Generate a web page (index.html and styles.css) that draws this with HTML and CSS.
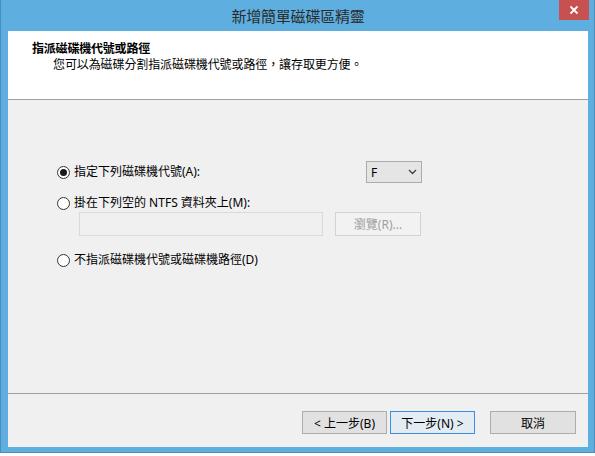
FILE: index.html
```html
<!DOCTYPE html>
<html lang="zh-Hant">
<head>
<meta charset="utf-8">
<title>新增簡單磁碟區精靈</title>
<link rel="stylesheet" href="styles.css">
</head>
<body>
<div class="window">
  <div class="titlebar">
    <span></span>
    <span class="title">新增簡單磁碟區精靈</span>
    <button class="close" aria-label="關閉">
      <svg width="10" height="10" viewBox="0 0 10 10"><path d="M1.5 1.5 L8.5 8.5 M8.5 1.5 L1.5 8.5" stroke="#fff" stroke-width="1.8" fill="none"/></svg>
    </button>
  </div>
  <div class="client">
    <div class="header">
      <div class="h-title">指派磁碟機代號或路徑</div>
      <div class="h-sub">您可以為磁碟分割指派磁碟機代號或路徑，讓存取更方便。</div>
    </div>
    <div class="body">
      <div class="options">
        <div class="row row-first">
          <label class="radio-label"><span class="radio checked"></span>指定下列磁碟機代號(A):</label>
          <div class="combo"><span>F</span>
            <svg width="9" height="6" viewBox="0 0 9 6"><path d="M1 1 L4.5 4.5 L8 1" stroke="#444" stroke-width="1.4" fill="none"/></svg>
          </div>
        </div>
        <div class="row row-second">
          <label class="radio-label"><span class="radio"></span>掛在下列空的 NTFS 資料夾上(M):</label>
        </div>
        <div class="row row-path">
          <div class="textbox"></div>
          <button class="btn disabled">瀏覽(R)...</button>
        </div>
        <div class="row row-third">
          <label class="radio-label"><span class="radio"></span>不指派磁碟機代號或磁碟機路徑(D)</label>
        </div>
      </div>
    </div>
    <div class="footer">
      <button class="btn">&lt; 上一步(B)</button>
      <button class="btn default">下一步(N) &gt;</button>
      <button class="btn cancel">取消</button>
    </div>
  </div>
</div>
</body>
</html>
```

FILE: styles.css
```css
* { box-sizing: border-box; }
html, body { margin: 0; padding: 0; }
body {
  background: #ffffff;
  font-family: "Noto Sans", "Noto Sans CJK TC", sans-serif;
  font-size: 12px;
  color: #000;
  width: 595px;
  height: 456px;
  overflow: hidden;
}
.window {
  display: flex;
  flex-direction: column;
  width: 595px;
  height: 453px;
  background: #5eaee0;
  border: 1px solid #4a8dbe;
  border-top: none;
  padding: 0 6px 5px 7px;
}
.titlebar {
  display: grid;
  grid-template-columns: 1fr auto 1fr;
  align-items: start;
  height: 31px;
  flex: none;
}
.title {
  font-family: "Noto Sans CJK TC", sans-serif;
  font-size: 15px;
  line-height: 31px;
  color: #2b2b2b;
  letter-spacing: -0.2px;
}
.close {
  justify-self: end;
  margin-right: -1px;
  width: 30px;
  height: 20px;
  border: none;
  padding: 0;
  background: #c75050;
  display: flex;
  align-items: center;
  justify-content: center;
}
.client {
  flex: 1;
  display: flex;
  flex-direction: column;
  background: #f0f0f0;
}
.header {
  height: 69px;
  flex: none;
  background: #ffffff;
  border-bottom: 1px solid #a0a0a0;
  padding: 9px 0 0 24px;
  font-family: "Noto Sans CJK TC", sans-serif;
}
.h-title {
  font-weight: bold;
  line-height: 16px;
  letter-spacing: -0.2px;
}
.h-sub {
  margin-top: 0px;
  padding-left: 21px;
  line-height: 16px;
  letter-spacing: -0.1px;
}
.body {
  flex: 1;
  border-bottom: 1px solid #a0a0a0;
}
.options {
  margin: 61px 0 0 49px;
  width: 365px;
  display: flex;
  flex-direction: column;
}
.row { display: flex; align-items: center; }
.row-first { height: 22px; justify-content: space-between; }
.row-second { height: 18px; margin-top: 11px; }
.row-path { height: 24px; padding-left: 22px; gap: 12px; }
.row-third { height: 18px; margin-top: 15px; }
.radio-label {
  display: flex;
  align-items: center;
  gap: 4px;
  line-height: 18px;
  white-space: nowrap;
}
.radio {
  width: 13px;
  height: 13px;
  border-radius: 50%;
  border: 1px solid #333;
  background: #fff;
  display: inline-flex;
  align-items: center;
  justify-content: center;
  flex: none;
}
.radio.checked::after {
  content: "";
  width: 7px;
  height: 7px;
  border-radius: 50%;
  background: #1a1a1a;
}
.combo {
  width: 56px;
  height: 22px;
  border: 1px solid #acacac;
  background: #e5e5e5;
  display: flex;
  align-items: center;
  justify-content: space-between;
  padding: 0 4px 0 4px;
}
.textbox {
  width: 244px;
  height: 24px;
  border: 1px solid #dadada;
  background: #f0f0f0;
}
.btn {
  font-family: "Noto Sans", "Noto Sans CJK TC", sans-serif;
  font-size: 12px;
  height: 23px;
  width: 85px;
  padding: 0;
  border: 1px solid #adadad;
  background: #e1e1e1;
  color: #000;
}
.btn.disabled {
  width: 86px;
  height: 24px;
  border-color: #d3d3d3;
  background: #f2f2f2;
  color: #a0a0a0;
}
.btn.default {
  border-color: #3d8ee0;
  background: #e3ebf3;
}
.btn.cancel { width: 86px; margin-left: 12px; }
.footer {
  height: 53px;
  flex: none;
  display: flex;
  justify-content: flex-end;
  align-items: flex-start;
  gap: 3px;
  padding: 17px 12px 0 0;
}
```
